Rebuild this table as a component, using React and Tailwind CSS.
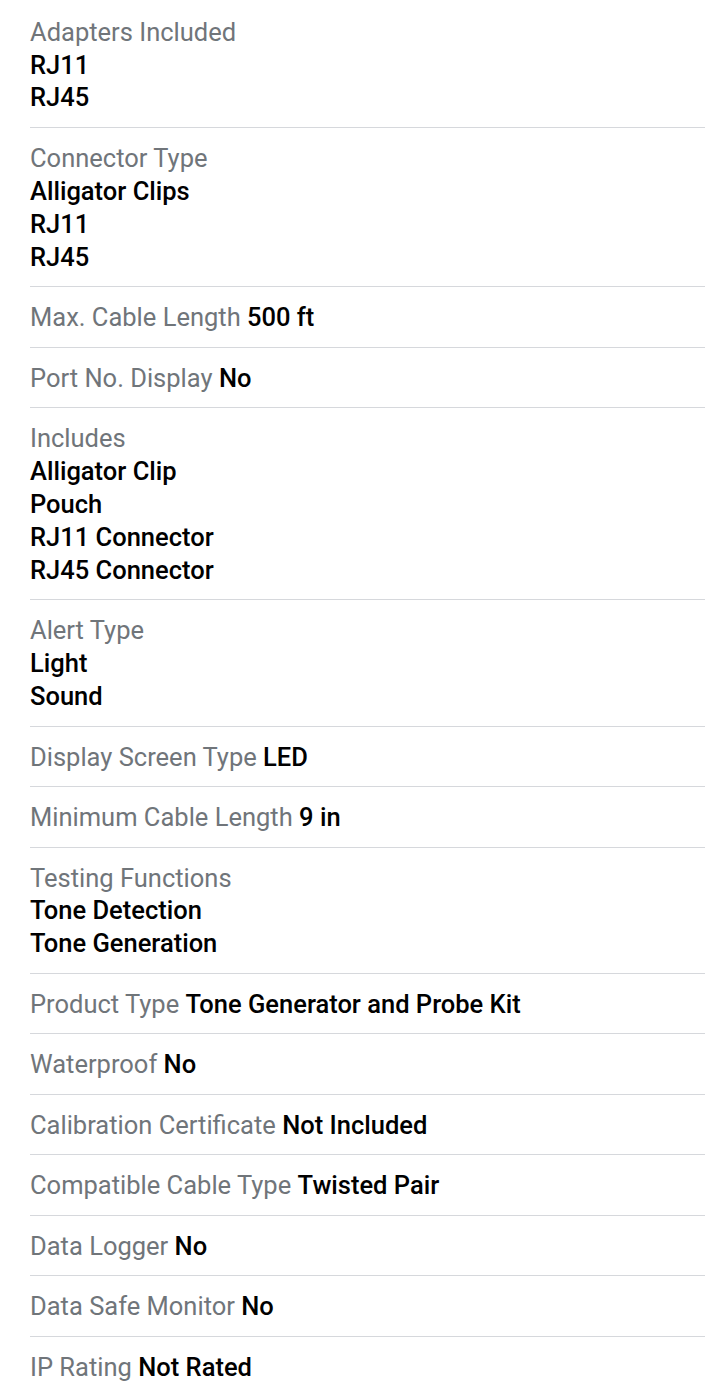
import React from "react";

const rows = [
  { label: "Adapters Included", values: ["RJ11", "RJ45"] },
  { label: "Connector Type", values: ["Alligator Clips", "RJ11", "RJ45"] },
  { label: "Max. Cable Length", inline: "500 ft" },
  { label: "Port No. Display", inline: "No" },
  { label: "Includes", values: ["Alligator Clip", "Pouch", "RJ11 Connector", "RJ45 Connector"] },
  { label: "Alert Type", values: ["Light", "Sound"] },
  { label: "Display Screen Type", inline: "LED" },
  { label: "Minimum Cable Length", inline: "9 in" },
  { label: "Testing Functions", values: ["Tone Detection", "Tone Generation"] },
  { label: "Product Type", inline: "Tone Generator and Probe Kit" },
  { label: "Waterproof", inline: "No" },
  { label: "Calibration Certificate", inline: "Not Included" },
  { label: "Compatible Cable Type", inline: "Twisted Pair" },
  { label: "Data Logger", inline: "No" },
  { label: "Data Safe Monitor", inline: "No" },
  { label: "IP Rating", inline: "Not Rated", last: true },
];

export default function App() {
  return (
    <div
      className="w-[705px] min-h-[1393px] bg-white pl-[30px] pt-[1px] text-[25.5px] leading-[32.9px]"
      style={{ fontFamily: "Roboto, 'Noto Sans', sans-serif" }}
    >
      {rows.map((r, i) => (
        <div
          key={i}
          className={
            "pb-[12.6px] " +
            (i === 0 ? "pt-[14.6px] " : "pt-[14px] ") +
            (r.last ? "" : "border-b border-[#d6d8dc]")
          }
        >
          {r.inline ? (
            <div>
              <span className="text-[#70757a]">{r.label}</span>{" "}
              <span className="font-medium text-black">{r.inline}</span>
            </div>
          ) : (
            <>
              <div className="text-[#70757a]">{r.label}</div>
              {r.values.map((v) => (
                <div key={v} className="font-medium text-black">
                  {v}
                </div>
              ))}
            </>
          )}
        </div>
      ))}
    </div>
  );
}
